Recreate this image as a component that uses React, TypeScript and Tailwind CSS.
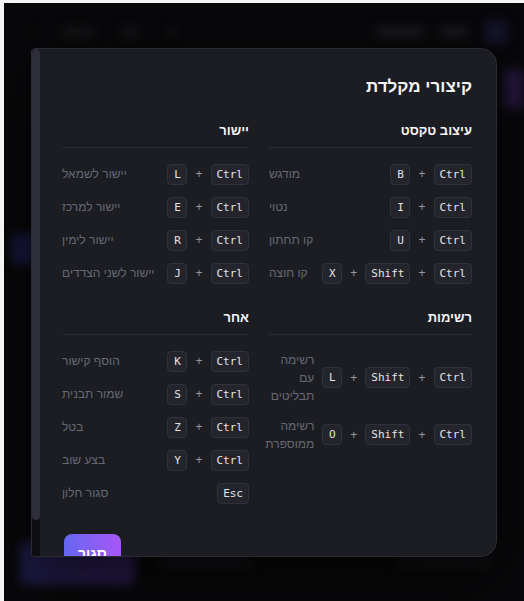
import React from "react";

type Shortcut = { keys: string[]; label: string };
type Group = { title: string; items: Shortcut[] };

const GROUPS: Group[] = [
  {
    title: "עיצוב טקסט",
    items: [
      { keys: ["Ctrl", "B"], label: "מודגש" },
      { keys: ["Ctrl", "I"], label: "נטוי" },
      { keys: ["Ctrl", "U"], label: "קו תחתון" },
      { keys: ["Ctrl", "Shift", "X"], label: "קו חוצה" },
    ],
  },
  {
    title: "יישור",
    items: [
      { keys: ["Ctrl", "L"], label: "יישור לשמאל" },
      { keys: ["Ctrl", "E"], label: "יישור למרכז" },
      { keys: ["Ctrl", "R"], label: "יישור לימין" },
      { keys: ["Ctrl", "J"], label: "יישור לשני הצדדים" },
    ],
  },
  {
    title: "רשימות",
    items: [
      { keys: ["Ctrl", "Shift", "L"], label: "רשימה עם תבליטים" },
      { keys: ["Ctrl", "Shift", "O"], label: "רשימה ממוספרת" },
    ],
  },
  {
    title: "אחר",
    items: [
      { keys: ["Ctrl", "K"], label: "הוסף קישור" },
      { keys: ["Ctrl", "S"], label: "שמור תבנית" },
      { keys: ["Ctrl", "Z"], label: "בטל" },
      { keys: ["Ctrl", "Y"], label: "בצע שוב" },
      { keys: ["Esc"], label: "סגור חלון" },
    ],
  },
];

function Key({ k }: { k: string }) {
  return (
    <kbd className="min-w-[20px] rounded border border-[#30313a] bg-[#24252c] px-[5px] py-[2px] text-center font-['DejaVu_Sans_Mono',monospace] text-[11px] leading-[15px] text-[#e4e4e7]">
      {k}
    </kbd>
  );
}

function Row({ item }: { item: Shortcut }) {
  return (
    <div className="flex items-center justify-between gap-2">
      <div className="flex shrink-0 items-center gap-2">
        {item.keys.map((k, i) => (
          <React.Fragment key={k}>
            {i > 0 && <span className="text-[12px] text-[#9496a0]">+</span>}
            <Key k={k} />
          </React.Fragment>
        ))}
      </div>
      <span className="text-[12px] leading-[18px] text-[#666975]">{item.label}</span>
    </div>
  );
}

export default function App() {
  return (
    <div className="h-[601px] w-[524px] overflow-hidden bg-[#f4f4f5] pl-[4px] pt-[3px] font-['Liberation_Sans',sans-serif]">
      <div className="relative h-full w-full overflow-hidden bg-[#08080a]">
        {/* blurred page behind the overlay */}
        <div className="flex h-full flex-col blur-[5px]" aria-hidden>
          <div className="flex h-[58px] items-center justify-between pl-6 pr-4">
            <div className="flex items-center gap-7">
              <span className="h-1.5 w-1.5 rounded-full bg-[#17171b]" />
              <span className="h-2 w-8 rounded bg-[#17171b]" />
              <span className="h-3 w-4 rounded bg-[#141418]" />
              <span className="h-2 w-2 rounded bg-[#17171b]" />
            </div>
            <div className="flex items-center gap-4">
              <span className="h-2.5 w-12 rounded bg-[#1a1a1f]" />
              <span className="h-2.5 w-7 rounded bg-[#1a1a1f]" />
              <span className="h-6 w-6 rounded-md bg-[#13132a]" />
            </div>
          </div>
          <div className="flex flex-1 justify-between">
            <span className="mt-[172px] ml-2 h-8 w-6 rounded bg-[#16163a]" />
            <span className="mt-2 h-10 w-5 rounded bg-[#23163a]" />
          </div>
          <div className="flex h-[60px] items-start justify-between pl-4 pr-8">
            <div className="flex items-center gap-6">
              <span className="h-[44px] w-[115px] rounded-lg bg-linear-to-r from-[#1c1a44] to-[#2a1a4a]" />
              <span className="h-2.5 w-24 rounded bg-[#131317]" />
            </div>
            <span className="mt-4 h-2.5 w-24 rounded bg-[#131317]" />
          </div>
        </div>

        {/* modal */}
        <div className="absolute inset-0 flex items-center justify-center" dir="rtl">
          <div className="flex h-[509px] w-[466px] overflow-hidden rounded-r-2xl rounded-l-sm border border-[#2b2c33] bg-[#1c1d22] shadow-[0_20px_60px_rgba(0,0,0,0.6)]">
            <div className="flex-1 overflow-hidden px-6 pt-6">
              <h2 className="mb-5 text-[17px] font-bold leading-7 text-[#f4f4f5]">קיצורי מקלדת</h2>
              <div className="grid grid-cols-[203px_187px] gap-x-5 gap-y-6">
                {GROUPS.map((g) => (
                  <section key={g.title}>
                    <h3 className="border-b border-[#2a2b31] pb-1.5 text-[13px] font-bold leading-5 text-[#f4f4f5]">
                      {g.title}
                    </h3>
                    <div className="mt-4 flex flex-col gap-3">
                      {g.items.map((it) => (
                        <Row key={it.label} item={it} />
                      ))}
                    </div>
                  </section>
                ))}
              </div>
              <div className="mt-[30px] flex justify-end">
                <button className="h-10 rounded-lg bg-linear-to-r from-[#6366f1] to-[#a855f7] px-3.5 text-[14px] font-bold text-white">
                  סגור
                </button>
              </div>
            </div>
            {/* scrollbar */}
            <div className="flex w-2 shrink-0 flex-col bg-[#0e0e11]">
              <div className="h-[471px] rounded-sm bg-[#2d2e39]" />
            </div>
          </div>
        </div>
      </div>
    </div>
  );
}
